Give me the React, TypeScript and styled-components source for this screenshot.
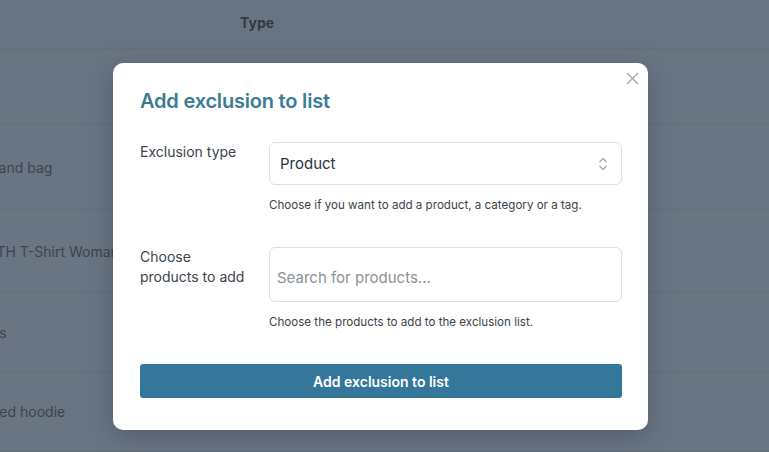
import styled, { createGlobalStyle } from "styled-components";

const GlobalStyle = createGlobalStyle`
  html, body {
    margin: 0;
    padding: 0;
    width: 769px;
    height: 452px;
    overflow: hidden;
    background: #687482;
    font-family: Inter, "Noto Sans", "Liberation Sans", sans-serif;
  }
  * { box-sizing: border-box; }
`;

const rows = [
  { name: "", shift: 0, height: 75 },
  { name: "Leather hand bag", shift: -64, height: 85 },
  { name: "WOOCOMMERCE TH T-Shirt Woman", shift: -125, height: 83 },
  { name: "Hoodies", shift: -48, height: 79 },
  { name: "Zipped hoodie", shift: -30, height: 80 },
];

function App() {
  return (
    <Page>
      <GlobalStyle />
      <Table>
        <HeaderRow>
          <NameCell $shift={0} />
          <HeadCell>Type</HeadCell>
        </HeaderRow>
        {rows.map((r, i) => (
          <Row key={i} $height={r.height}>
            <NameCell $shift={r.shift}>{r.name}</NameCell>
            <TypeCell />
          </Row>
        ))}
      </Table>

      <Modal>
        <CloseButton aria-label="Close">
          <svg width="13" height="13" viewBox="0 0 13 13">
            <path d="M1 1 L12 12 M12 1 L1 12" stroke="#a7aaad" strokeWidth="1.4" />
          </svg>
        </CloseButton>
        <Title>Add exclusion to list</Title>
        <Form>
          <Label>Exclusion type</Label>
          <Field>
            <SelectBox>
              <span>Product</span>
              <svg width="10" height="16" viewBox="0 0 10 16">
                <path d="M1.5 6 L5 2.5 L8.5 6 M1.5 10 L5 13.5 L8.5 10" stroke="#9ea3a8" strokeWidth="1.2" fill="none" />
              </svg>
            </SelectBox>
            <Help>Choose if you want to add a product, a category or a tag.</Help>
          </Field>

          <Label>
            Choose
            <br />
            products to add
          </Label>
          <Field>
            <SearchInput placeholder="Search for products..." />
            <Help>Choose the products to add to the exclusion list.</Help>
          </Field>
        </Form>
        <SubmitButton type="button">Add exclusion to list</SubmitButton>
      </Modal>
    </Page>
  );
}

export default App;

const Page = styled.div`
  position: relative;
  width: 769px;
  height: 452px;
  overflow: hidden;
`;

const Table = styled.div`
  display: flex;
  flex-direction: column;
`;

const HeaderRow = styled.div`
  display: grid;
  grid-template-columns: 240px 1fr;
  align-items: center;
  height: 50px;
  padding-bottom: 4px;
  border-bottom: 1px solid #626d7a;
`;

const HeadCell = styled.div`
  font-size: 14px;
  font-weight: 700;
  color: #303a45;
`;

const Row = styled.div<{ $height: number }>`
  display: grid;
  grid-template-columns: 240px 1fr;
  align-items: center;
  height: ${(p) => p.$height}px;
  border-bottom: 1px solid #636e7b;
  background: #697583;
`;

const NameCell = styled.div<{ $shift: number }>`
  font-size: 14px;
  color: #3a4451;
  white-space: nowrap;
  overflow: hidden;
  text-indent: ${(p) => p.$shift}px;
`;

const TypeCell = styled.div``;

const Modal = styled.div`
  position: absolute;
  left: 113px;
  top: 63px;
  width: 535px;
  height: 367px;
  background: #fff;
  border-radius: 10px;
  padding: 24px 26px 32px 27px;
  box-shadow: 0 6px 24px rgba(40, 50, 65, 0.35);
  display: flex;
  flex-direction: column;
`;

const CloseButton = styled.button`
  position: absolute;
  top: 6px;
  right: 7px;
  width: 18px;
  height: 18px;
  padding: 0;
  border: none;
  background: none;
  display: flex;
  align-items: center;
  justify-content: center;
`;

const Title = styled.h2`
  margin: 0;
  font-size: 20px;
  line-height: 28px;
  font-weight: 600;
  color: #3a7b95;
  letter-spacing: -0.2px;
`;

const Form = styled.div`
  display: grid;
  grid-template-columns: 129px 353px;
  row-gap: 33px;
  margin-top: 27px;
`;

const Label = styled.div`
  font-size: 14px;
  line-height: 20px;
  color: #3c434a;
`;

const Field = styled.div`
  display: flex;
  flex-direction: column;
  gap: 11px;
`;

const SelectBox = styled.div`
  height: 43px;
  border: 1px solid #dcdfe2;
  border-radius: 6px;
  padding: 0 13px 0 10px;
  display: flex;
  align-items: center;
  justify-content: space-between;
  font-size: 15px;
  color: #2c3338;
`;

const SearchInput = styled.input`
  height: 55px;
  border: 1px solid #dcdfe2;
  border-radius: 6px;
  padding: 5px 7px 0;
  font-family: inherit;
  font-size: 15px;
  color: #2c3338;
  outline: none;
  &::placeholder {
    color: #8c9196;
  }
`;

const Help = styled.div`
  font-size: 11.6px;
  line-height: 18px;
  color: #3c434a;
`;

const SubmitButton = styled.button`
  margin-top: 33px;
  height: 34px;
  width: 482px;
  border: none;
  border-radius: 3px;
  background: #35779a;
  color: #fff;
  font-family: inherit;
  font-size: 14px;
  font-weight: 600;
`;
